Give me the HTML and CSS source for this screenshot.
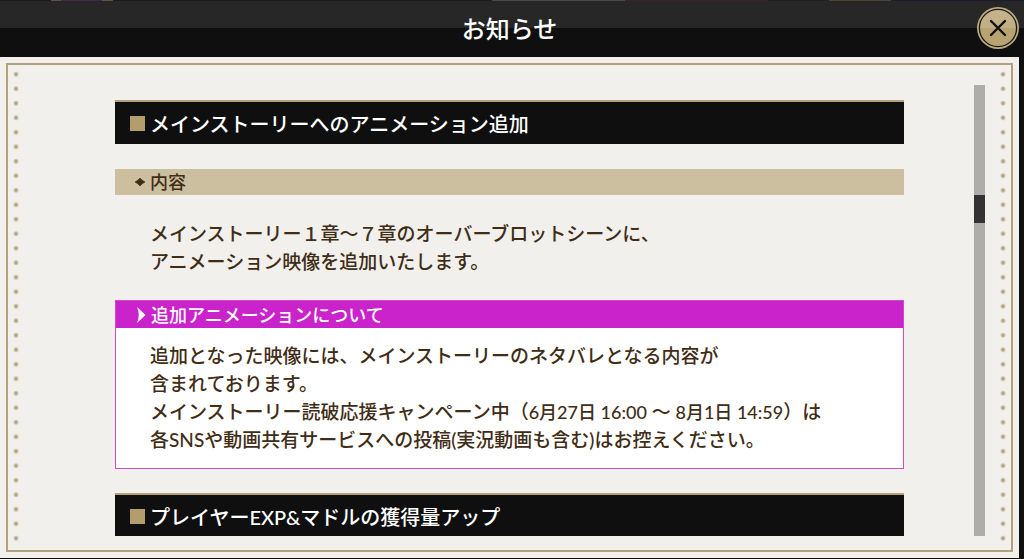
FILE: index.html
```
<!DOCTYPE html>
<html lang="ja">
<head>
<meta charset="utf-8">
<meta name="viewport" content="width=device-width, initial-scale=1">
<title>お知らせ</title>
<link rel="stylesheet" href="styles.css">
</head>
<body>
<div class="window">
  <header class="titlebar">
    <h1 class="title">お知らせ</h1>
    <button class="close" type="button" aria-label="閉じる">
      <svg viewBox="0 0 42 42" aria-hidden="true">
        <defs>
          <linearGradient id="gold" x1="0" y1="0" x2="0" y2="1">
            <stop offset="0" stop-color="#c5b48f"/>
            <stop offset=".5" stop-color="#c0ae84"/>
            <stop offset=".5" stop-color="#b8a473"/>
            <stop offset="1" stop-color="#b7a271"/>
          </linearGradient>
        </defs>
        <circle cx="21" cy="21" r="21" fill="#b9a985"/>
        <circle cx="21" cy="21" r="18.6" fill="url(#gold)" stroke="#1d1810" stroke-width="1.3"/>
        <path d="M14 14L28 28M28 14L14 28" fill="none" stroke="#12100c" stroke-width="2.4" stroke-linecap="round"/>
      </svg>
    </button>
  </header>
  <main class="paper">
    <div class="frame">
      <div class="dots"></div>
      <div class="viewer">
        <div class="scroller">
          <section>
            <h2 class="heading"><span class="square"></span>メインストーリーへのアニメーション追加</h2>
            <h3 class="subheading">
              <svg class="mark" viewBox="0 0 10 8" aria-hidden="true"><path d="M5 0Q7 2.500 10 4Q7 5.500 5 8Q3 5.500 0 4Q3 2.500 5 0Z" fill="#3f2d16" stroke="#3f2d16" stroke-width=".6"/></svg>内容</h3>
            <p class="text">メインストーリー１章〜７章のオーバーブロットシーンに、<br>アニメーション映像を追加いたします。</p>
            <div class="notice">
              <h3 class="notice-title">
                <svg class="mark arrow" viewBox="0 0 10 16" aria-hidden="true"><path d="M1 0L9.500 8L1 16Q4.500 8 1 0Z" fill="#fff"/></svg>追加アニメーションについて</h3>
              <p class="notice-text">追加となった映像には、メインストーリーのネタバレとなる内容が<br>含まれております。<br>メインストーリー読破応援キャンペーン中（<time>6月27日 16:00</time> 〜 <time>8月1日 14:59</time>）は<br>各SNSや動画共有サービスへの投稿(実況動画も含む)はお控えください。</p>
            </div>
          </section>
          <section>
            <h2 class="heading"><span class="square"></span>プレイヤーEXP&amp;マドルの獲得量アップ</h2>
          </section>
        </div>
        <div class="scrollbar"><div class="thumb"></div></div>
      </div>
      <div class="dots"></div>
    </div>
  </main>
</div>
</body>
</html>
```
FILE: styles.css
```
* {
  box-sizing: border-box;
}

body {
  margin: 0;
  background: #0f0f0f;
  color: #3f2d16;
  font-family: Lato, "Noto Sans CJK JP", sans-serif;
  font-weight: 500;
}

h1, h2, h3, p {
  margin: 0;
  font-weight: 500;
}

.window {
  display: flex;
  flex-direction: column;
  height: 100vh;
}

.titlebar {
  position: relative;
  flex: none;
  height: 57px;
  padding-right: 5px;
  background: linear-gradient(#272727 50%, #0f0f0f 50%);
}

/* Sliver of the scene behind the window */
.titlebar::before {
  content: "";
  position: absolute;
  inset: 0 0 auto;
  height: 1px;
  background: linear-gradient(90deg, #1f1a1c 5%, #5c5348 5% 6%, #492650 6% 10%, #5c5348 10% 11%, #1c1c1e 11% 48%, #484a50 48% 61%, #3e2025 61% 75%, #202020 75% 81%, #4b4634 81% 87%, #1c1d2c 87%);
}

.title {
  color: #fff;
  font-size: 24px;
  line-height: 58px;
  text-align: center;
}

.close {
  position: absolute;
  top: 7px;
  right: 5px;
  width: 42px;
  height: 42px;
  padding: 0;
  border: 0;
  border-radius: 50%;
  background: none;
  cursor: pointer;
}

.close svg {
  display: block;
}

.paper {
  display: flex;
  flex: 1;
  min-height: 0;
  margin: 0 5px 1px 0;
  padding: 6px;
  background: #f1f0ed;
}

.frame {
  display: grid;
  flex: 1;
  grid-template-columns: 16px minmax(0, 1fr) 16px;
  grid-template-rows: minmax(0, 1fr);
  border: 2px solid #b3a17c;
}

.dots {
  margin: 2px 0 4px;
  background: radial-gradient(circle, #b3a17c 1px, #b3a17c00 3px) 0 0 / 100% calc(100% / 33);
}

.viewer {
  display: flex;
  gap: 70px;
  padding: 20px 10px 14px 91px;
}

.scroller {
  flex: 1;
  padding-top: 15px;
  overflow: hidden;
}

.heading {
  display: flex;
  align-items: center;
  gap: 5px;
  height: 44px;
  padding-left: 15px;
  border-top: 2px solid #b3a17c;
  background: #0f0f0f;
  color: #fff;
  font-size: 20px;
}

.square {
  width: 15px;
  height: 15px;
  background: #b39d6d;
}

.subheading,
.notice-title {
  display: flex;
  align-items: center;
  gap: 5px;
  font-size: 18px;
  line-height: 26px;
}

.subheading {
  margin-top: 25px;
  padding-left: 20px;
  background: #cbbfa0;
}

.mark {
  flex: none;
  width: 10px;
  height: 8px;
}

.arrow {
  height: 16px;
}

.text,
.notice-text {
  font-size: 19px;
  line-height: 28px;
}

.text {
  margin: 25px 0 24px;
  padding-left: 35px;
}

.notice {
  margin-bottom: 24px;
  border: 1px solid #c94fc9;
  background: #fff;
}

.notice-title {
  height: 27px;
  padding-left: 20px;
  background: #cb23cb;
  color: #fff;
}

.notice-text {
  padding: 14px 0 14px 34px;
}

.notice-text time {
  font-size: 18px;
}

.scrollbar {
  flex: none;
  width: 11px;
  padding-top: 110px;
  background: #adadab;
}

.thumb {
  height: 28px;
  background: #333;
}
```
